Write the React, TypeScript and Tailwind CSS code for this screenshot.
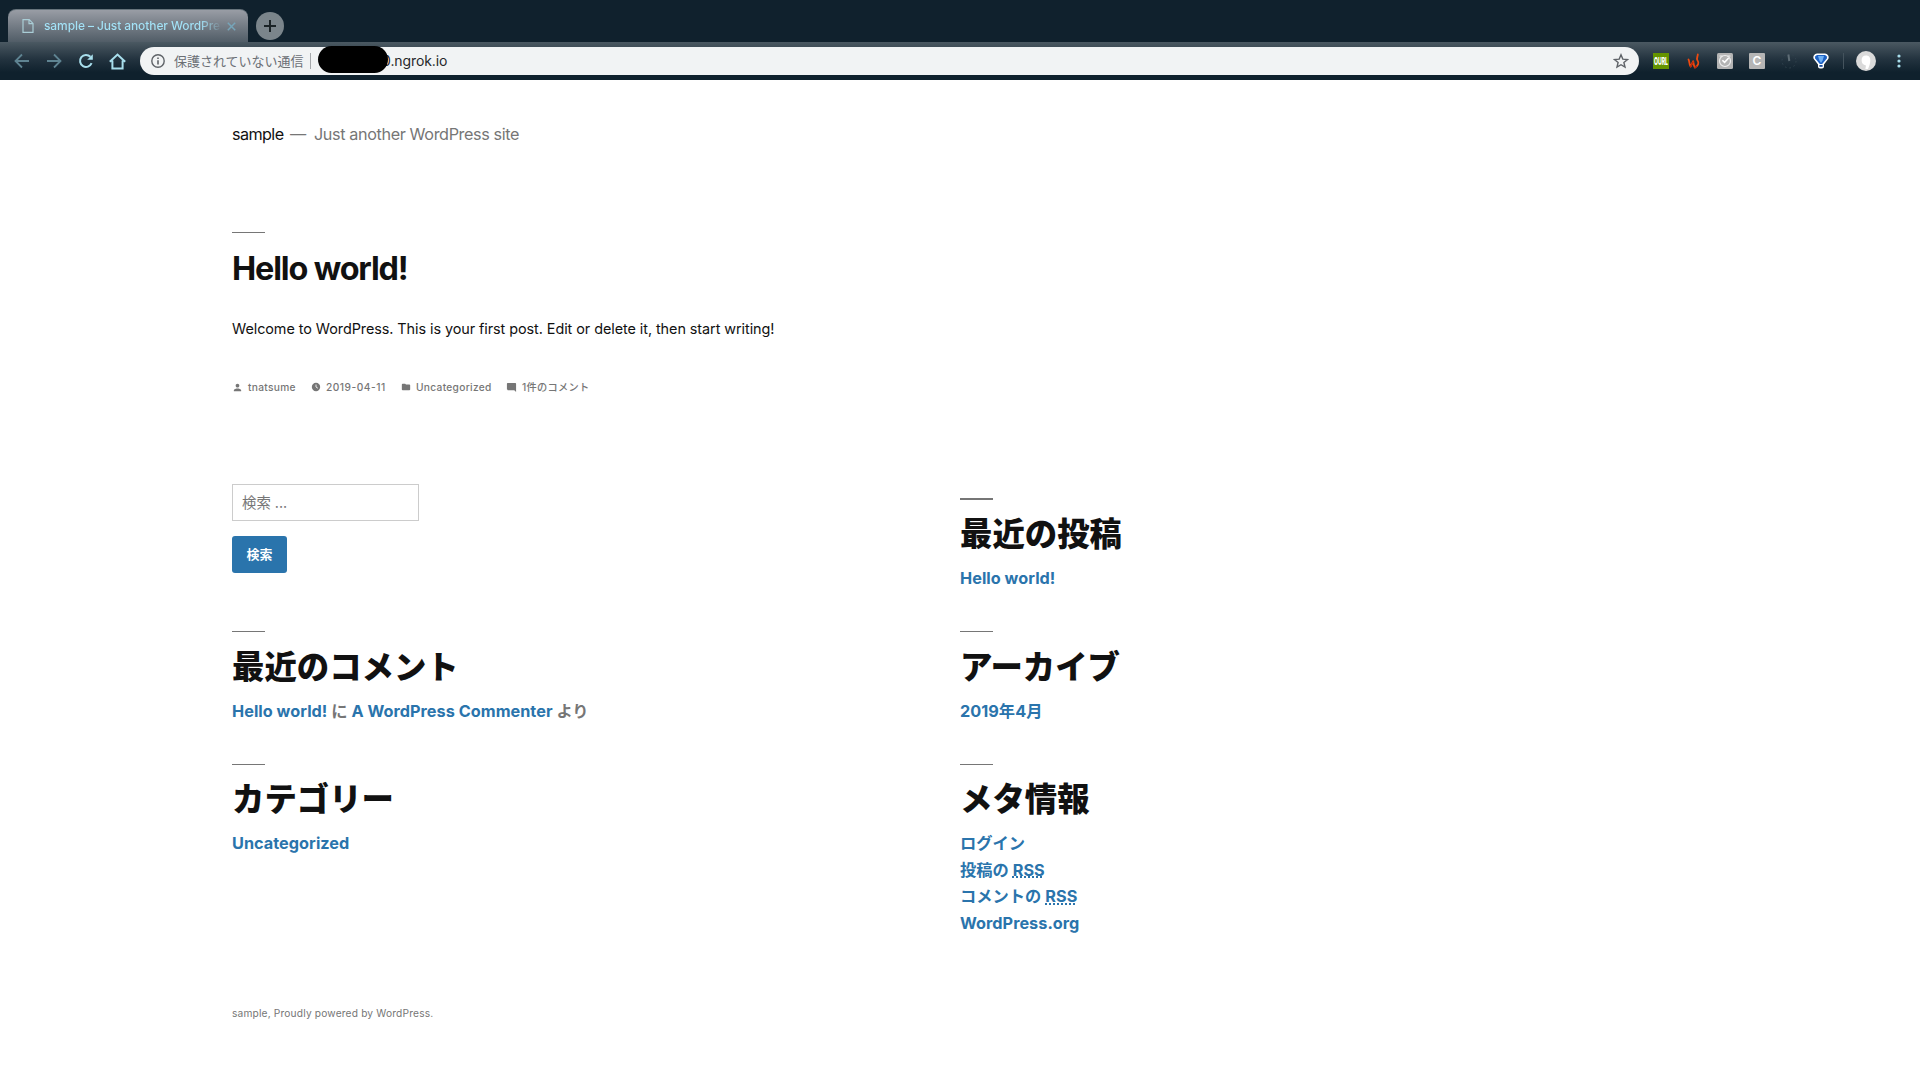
import type { ReactNode } from "react";

const headingGaps = {
  first: "mt-[15px] mb-[10px]",
  middle: "mt-[16px] mb-[10px]",
  last: "mt-[15px] mb-[10px]",
};

function Widget({ title, row, thick = false, children }: {
  title: string;
  row: keyof typeof headingGaps;
  thick?: boolean;
  children: ReactNode;
}) {
  return (
    <section className="h-[133px]">
      <div className={thick ? "h-[2px] w-[33px] bg-[#767676]" : "h-px w-[33px] bg-[#767676]"} />
      <h2 className={`${headingGaps[row]} h-[40px] whitespace-nowrap text-[32.4px] leading-[40px] font-black text-[#111]`}>
        {title}
      </h2>
      <div className="whitespace-nowrap text-[16.25px] leading-[26.5px] font-bold tracking-[0.03px] text-[#767676]">
        {children}
      </div>
    </section>
  );
}

function Link({ children }: { children: ReactNode }) {
  return (
    <a href="#" className="text-[#2a74ac]">
      {children}
    </a>
  );
}

function Rss() {
  return <abbr className="underline decoration-dotted decoration-2 underline-offset-1">RSS</abbr>;
}

function TabStrip() {
  return (
    <div className="flex h-[42px] items-start">
      <div className="ml-[8px] mt-[9px] flex h-[33px] w-[240px] items-center rounded-t-[8px] border-t border-[#68747c] bg-linear-to-b from-[#999da5] to-[#515d67] pl-[14px]">
        <svg width="12" height="16" viewBox="0 0 12 16" fill="none" stroke="#a9cdd6" strokeWidth="1.2">
          <path d="M1 1.6h6.2L11 5.4v9H1zM7 1.6v4h4" />
        </svg>
        <div className="ml-[10px] w-[176px] overflow-hidden whitespace-nowrap bg-linear-to-r from-[#a3e3f8] from-88% to-[#a3e3f8]/10 bg-clip-text text-[12px] leading-[16px] font-medium tracking-[-0.1px] text-transparent">
          sample – Just another WordPre
        </div>
        <svg className="ml-[7px]" width="9" height="9" viewBox="0 0 9 9" stroke="#76a5b9" strokeWidth="1.5">
          <path d="M.8.8l7.4 7.4M8.2.8L.8 8.2" />
        </svg>
      </div>
      <div className="ml-[8px] mt-[12px] grid size-[28px] place-items-center rounded-full bg-[#7b858b]">
        <svg width="12" height="12" viewBox="0 0 12 12" stroke="#1b2326" strokeWidth="2">
          <path d="M6 0v12M0 6h12" />
        </svg>
      </div>
    </div>
  );
}

function Toolbar() {
  return (
    <div className="flex h-[38px] items-center bg-linear-to-b from-[#4b5962] via-[#23333f] via-45% to-[#0f212d] to-80%">
      <svg className="ml-[14px]" width="16" height="16" viewBox="0 0 16 16" fill="none" stroke="#5f8492" strokeWidth="1.8">
        <path d="M15 8H2M8 1.5L1.5 8 8 14.5" />
      </svg>
      <svg className="ml-[16px]" width="16" height="16" viewBox="0 0 16 16" fill="none" stroke="#5f8492" strokeWidth="1.8">
        <path d="M1 8h13M8 1.5L14.5 8 8 14.5" />
      </svg>
      <svg className="ml-[16px]" width="16" height="16" viewBox="0 0 16 16" fill="none" stroke="#a8deec" strokeWidth="2">
        <path d="M13.6 10.2A6 6 0 1 1 12.4 3.8" />
        <path d="M14.8 1.2v5.6H9.2z" fill="#a8deec" stroke="none" />
      </svg>
      <svg className="ml-[15px]" width="17" height="17" viewBox="0 0 17 17" fill="none" stroke="#a8deec" strokeWidth="2">
        <path d="M.8 8.8L8.5 1.6l7.7 7.2M3.4 7.5v8h10.2v-8" />
      </svg>

      <div className="ml-[14px] flex h-[28px] w-[1499px] items-center rounded-full bg-[#f1f3f4]">
        <svg className="ml-[11px]" width="14" height="14" viewBox="0 0 14 14" fill="none" stroke="#5f6368" strokeWidth="1.4">
          <circle cx="7" cy="7" r="6.2" />
          <path d="M7 6.2v4.2M7 3.4v1.6" strokeWidth="1.6" />
        </svg>
        <span className="ml-[9px] w-[130px] whitespace-nowrap text-[13px] leading-none text-[#6b6f74]">
          保護されていない通信
        </span>
        <div className="ml-[6px] h-[16px] w-px bg-[#a5a8ab]" />
        <div className="relative ml-[71px] text-[14px] leading-[20px] tracking-[-0.1px] text-[#26282b]">
          0.ngrok.io
          <div className="absolute -left-[64px] -top-[5px] h-[27px] w-[70px] rounded-full bg-black" />
        </div>
        <svg className="ml-auto mr-[10px]" width="16" height="16" viewBox="0 0 16 16" fill="none" stroke="#5f6368" strokeWidth="1.4">
          <path d="M8 1.8l1.8 4.3 4.7.4-3.6 3 1.1 4.6L8 11.7l-4 2.4 1.1-4.6-3.6-3 4.7-.4z" />
        </svg>
      </div>

      <svg className="ml-[14px]" width="16" height="16" viewBox="0 0 16 16">
        <path d="M0 0h16v16H0z" fill="#659400" />
        <text x="1" y="12" textLength="14" lengthAdjust="spacingAndGlyphs" fontSize="11" fontWeight="800" fill="#fff">
          OURL
        </text>
      </svg>
      <svg className="ml-[18px]" width="13" height="16" viewBox="0 0 13 16" fill="none" strokeLinejoin="round" strokeLinecap="round">
        <path d="M1.500 6.500C2.800 8.500 1.800 11 3.600 13.600L6.200 8.200c.4 2.400.4 4.600 1.800 6.400C11 12.400 12.600 10 10.400 7.200 9.200 5 10.800 3.600 10.800 1.400" stroke="#ee4a10" strokeWidth="1.800" />
        <path d="M3.600 13.600L6 9M8 14.600l1.400-1.200" stroke="#b9280c" strokeWidth="1.500" />
      </svg>
      <svg className="ml-[17px]" width="16" height="16" viewBox="0 0 16 16" fill="none">
        <rect width="16" height="16" rx="1.5" fill="#b4b4b4" />
        <circle cx="8" cy="8" r="5.500" stroke="#efefef" strokeWidth="1.200" />
        <path d="M2.500 3h3M10.500 3h3" stroke="#efefef" />
        <path d="M5.400 7.200L7.600 9.400l4-4.400" stroke="#fff" strokeWidth="1.6" />
      </svg>
      <div className="ml-[16px] grid size-[16px] place-items-center rounded-[1px] bg-[#b5b5b5] text-[12px] leading-none font-semibold text-white">
        C
      </div>
      <svg className="ml-[16px]" width="16" height="16" viewBox="0 0 16 16" fill="none" stroke="#33444f">
        <circle cx="8" cy="8" r="7" strokeDasharray="1.500 3" />
        <path d="M7.400 1.500L8.300 8" stroke="#5e6c75" strokeWidth="2" />
      </svg>
      <svg className="ml-[16px]" width="16" height="16" viewBox="0 0 16 16">
        <path d="M4 .4h8a4 4 0 0 1 3.400 5.400L11 11.600v2a2 2 0 0 1-2 2H7a2 2 0 0 1-2-2v-2L.6 5.800A4 4 0 0 1 4 .4z" fill="#fff" />
        <path d="M4.200 2h7.600a2.600 2.600 0 0 1 2 3.500L9.200 11H6.800L2.200 5.500A2.600 2.600 0 0 1 4.200 2z" fill="#1e62c4" />
        <path d="M5 3h6l-1.400 4.600L8 10 6.400 7.600z" fill="#6fb0f4" />
        <path d="M6.400 12h3.200v1.800H6.400z" fill="#174a9c" />
      </svg>
      <div className="ml-[14px] h-[16px] w-px bg-[#44535d]" />
      <svg className="ml-[12px]" width="20" height="20" viewBox="0 0 20 20">
        <circle cx="10" cy="10" r="10" fill="#dadada" />
        <path d="M10 4.500c3.200 0 4.400 2.200 4.300 5-.1 3-1 5.500-2.300 8.500h-2.600l.6-3.600C7 14 5.600 12 5.600 9.300c0-2.800 1.400-4.800 4.400-4.800z" fill="#fff" />
      </svg>
      <svg className="ml-[21px]" width="4" height="14" viewBox="0 0 4 14" fill="#a8deec">
        <circle cx="2" cy="2" r="1.600" />
        <circle cx="2" cy="7" r="1.600" />
        <circle cx="2" cy="12" r="1.600" />
      </svg>
    </div>
  );
}

function PostMeta() {
  return (
    <div className="mt-[36px] flex h-[20px] items-center text-[10.2px] leading-[20px] font-medium tracking-[0.3px] text-[#767676]">
      <svg width="11" height="11" viewBox="0 0 24 24" fill="currentColor">
        <path d="M12 12c2.210 0 4-1.790 4-4s-1.790-4-4-4-4 1.790-4 4 1.790 4 4 4zm0 2c-2.670 0-8 1.340-8 4v2h16v-2c0-2.660-5.330-4-8-4z" />
      </svg>
      <span className="ml-[5px] w-[48px] whitespace-nowrap">tnatsume</span>
      <svg className="ml-[15px]" width="10" height="10" viewBox="0 0 24 24">
        <circle cx="12" cy="12" r="10" fill="currentColor" />
        <path d="M12 6v6l4.500 3" fill="none" stroke="#fff" strokeWidth="2" />
      </svg>
      <span className="ml-[5px] w-[60px] whitespace-nowrap tracking-[0.5px]">2019-04-11</span>
      <svg className="ml-[15px]" width="10" height="10" viewBox="0 0 24 24" fill="currentColor">
        <path d="M10 4H4c-1.100 0-2 .9-2 2v12c0 1.100.9 2 2 2h16c1.100 0 2-.9 2-2V8c0-1.100-.9-2-2-2h-8z" />
      </svg>
      <span className="ml-[5px] w-[76px] whitespace-nowrap">Uncategorized</span>
      <svg className="ml-[14px]" width="11" height="11" viewBox="0 0 24 24" fill="currentColor">
        <path d="M22 4c0-1.100-.9-2-2-2H4c-1.100 0-2 .9-2 2v12c0 1.100.9 2 2 2h14l4 4z" />
      </svg>
      <span className="ml-[5px] whitespace-nowrap">1件のコメント</span>
    </div>
  );
}

export default function App() {
  return (
    <div className="h-[1080px] overflow-hidden bg-white font-['Inter','Noto_Sans_CJK_JP',sans-serif]">
      <header className="h-[80px] bg-[#10212d]">
        <TabStrip />
        <Toolbar />
      </header>

      <main className="pl-[232px]">
        <div className="flex h-[65px] items-end whitespace-nowrap text-[16.2px] leading-[22px] tracking-[-0.38px]">
          <p className="w-[58px] tracking-[-0.6px] text-[#111]">sample</p>
          <p className="w-[24px] text-[#767676]">—</p>
          <p className="text-[#767676]">Just another WordPress site</p>
        </div>

        <article className="mt-[87px]">
          <div className="h-px w-[33px] bg-[#767676]" />
          <h1 className="mt-[16px] h-[40px] text-[32.4px] leading-[40px] font-bold tracking-[-1.15px] text-[#111]">
            Hello world!
          </h1>
          <p className="mt-[28px] h-[24px] text-[14.4px] leading-[24px] tracking-[-0.06px] text-[#111]">
            Welcome to WordPress. This is your first post. Edit or delete it, then start writing!
          </p>
          <PostMeta />
        </article>

        <div className="mt-[87px] grid h-[480px] grid-cols-[728px_1fr]">
          <div>
            <form className="h-[147px]">
              <input
                placeholder="検索 ..."
                className="block h-[37px] w-[187px] border border-[#ccc] px-[9px] text-[14.4px] text-[#767676] placeholder:text-[#767676]"
              />
              <button
                type="button"
                className="mt-[15px] block h-[37px] w-[55px] rounded-[3px] bg-[#2a74ac] text-[13px] leading-none font-bold text-white"
              >
                検索
              </button>
            </form>
            <Widget title="最近のコメント" row="middle">
              <Link>Hello world!</Link> に <Link>A WordPress Commenter</Link> より
            </Widget>
            <Widget title="カテゴリー" row="last">
              <Link>Uncategorized</Link>
            </Widget>
          </div>
          <div className="pt-[14px]">
            <Widget title="最近の投稿" row="first" thick>
              <Link>Hello world!</Link>
            </Widget>
            <Widget title="アーカイブ" row="middle">
              <Link>2019年4月</Link>
            </Widget>
            <Widget title="メタ情報" row="last">
              <div><Link>ログイン</Link></div>
              <div><Link>投稿の <Rss /></Link></div>
              <div><Link>コメントの <Rss /></Link></div>
              <div><Link>WordPress.org</Link></div>
            </Widget>
          </div>
        </div>

        <footer className="mt-[40px] text-[10.2px] leading-[18px] tracking-[0.17px] text-[#767676]">
          sample, Proudly powered by WordPress.
        </footer>
      </main>
    </div>
  );
}
